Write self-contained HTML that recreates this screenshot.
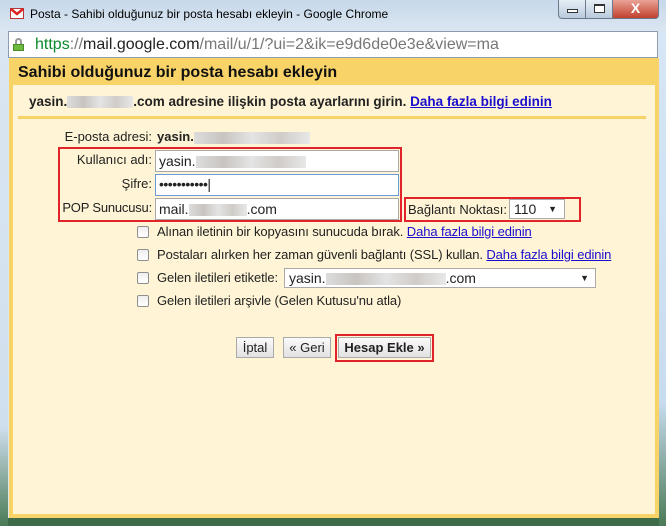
<!DOCTYPE html>
<html><head><meta charset="utf-8"><style>
*{margin:0;padding:0;box-sizing:border-box}
body{width:666px;height:526px;overflow:hidden;background:#dbe6f1;font-family:"Liberation Sans",Arial,sans-serif;font-size:13px;color:#222;position:relative}
.abs{position:absolute}
.title{left:30px;top:7px;font-size:12px;color:#000}
.wb{top:0;height:19px;border:1px solid #6b7a8c;border-top:none}
.addr{left:8px;top:31px;width:650px;height:27px;background:#fff;border:1px solid #8d9cb0;font-size:16px;line-height:25px;padding-left:26px;color:#777}
.content{left:9px;top:58px;width:650px;height:460px;background:#f8d468}
.inner{left:13px;top:85px;width:642px;height:429px;background:#fff5d6}
.h{left:18px;top:64px;font-size:16px;font-weight:bold;color:#111}
.lbl{text-align:right;width:150px;left:2px;font-size:13px}
.inp{left:155px;width:244px;height:22px;background:#fff;border:1px solid #a9a9a9;font-size:14px;line-height:20px;padding-left:3px}
.blur{display:inline-block;height:12px;background:linear-gradient(90deg,#ddd,#c8c4c0,#e4e4e4,#d0ccc8,#e8e8e8);vertical-align:middle}
.red{border:2px solid #e3232a}
.cb{left:137px;width:12px;height:12px;border:1px solid #8f8f8f;border-radius:2px;background:linear-gradient(#eee,#fff)}
.ct{left:157px;font-size:13px;letter-spacing:-0.1px}
a{color:#1a0dcc;text-decoration:underline}
.btn{top:337px;height:21px;border:1px solid #aaa;background:linear-gradient(#fafafa,#e2e2e2);font-size:13px;text-align:center;line-height:19px}
</style></head><body>
<div class="abs" style="left:0;top:0;width:666px;height:31px;background:linear-gradient(#c6d8ea,#dbe6f1)"></div>
<div class="abs" style="left:10px;top:8px;width:14px;height:11px;background:#fff;border:1px solid #b33"><svg width="12" height="9" style="display:block"><path d="M0 0 L6 5 L12 0" stroke="#d22" stroke-width="2.5" fill="none"/></svg></div>
<div class="abs title">Posta - Sahibi olduğunuz bir posta hesabı ekleyin - Google Chrome</div>
<div class="abs wb" style="left:558px;width:28px;background:linear-gradient(#e6eef6,#b9cadc);border-radius:0 0 0 4px"><div class="abs" style="left:8px;top:9px;width:11px;height:4px;border:1px solid #333;background:#fff"></div></div>
<div class="abs wb" style="left:585px;width:28px;background:linear-gradient(#e6eef6,#b9cadc)"><div class="abs" style="left:8px;top:4px;width:11px;height:9px;border:1px solid #333;border-top-width:2px;background:#fff"></div></div>
<div class="abs wb" style="left:612px;width:47px;background:linear-gradient(#e8a396,#c2402e);border-radius:0 0 4px 0;color:#fff;font-weight:bold;font-size:14px;text-align:center;line-height:17px">X</div>
<div class="abs addr"><span style="color:#0a8a2a">https</span>://<span style="color:#222">mail.google.com</span>/mail/u/1/?ui=2&amp;ik=e9d6de0e3e&amp;view=ma</div>
<div class="abs" style="left:13px;top:38px;width:11px;height:13px"><div style="width:7px;height:6px;margin-left:2px;border:2px solid #999;border-bottom:none;border-radius:4px 4px 0 0"></div><div style="width:11px;height:7px;background:#6dbb3c;border:1px solid #4a8a2a"></div></div>
<div class="abs content"></div>
<div class="abs inner"></div>
<div class="abs h">Sahibi olduğunuz bir posta hesabı ekleyin</div>
<div class="abs" style="left:29px;top:94px;font-weight:bold;font-size:13.5px">yasin.<span class="blur" style="width:66px"></span>.com adresine ilişkin posta ayarlarını girin. <a>Daha fazla bilgi edinin</a></div>
<div class="abs" style="left:18px;top:116px;width:628px;height:3px;background:#f8d468"></div>
<div class="abs lbl" style="top:129px">E-posta adresi: </div>
<div class="abs" style="left:157px;top:129px;font-weight:bold">yasin.<span class="blur" style="width:116px"></span></div>
<div class="abs red" style="left:58px;top:147px;width:344px;height:75px"></div>
<div class="abs lbl" style="top:152px">Kullanıcı adı:</div>
<div class="abs lbl" style="top:176px">Şifre:</div>
<div class="abs lbl" style="top:200px;letter-spacing:-0.2px">POP Sunucusu:</div>
<div class="abs inp" style="top:150px">yasin.<span class="blur" style="width:110px"></span></div>
<div class="abs inp" style="top:174px;border-color:#6a9ad8;line-height:18px;letter-spacing:-0.5px">•••••••••••|</div>
<div class="abs inp" style="top:198px">mail.<span class="blur" style="width:58px"></span>.com</div>
<div class="abs red" style="left:404px;top:197px;width:177px;height:25px"></div>
<div class="abs" style="left:408px;top:202px;font-size:13px">Bağlantı Noktası:</div>
<div class="abs" style="left:509px;top:199px;width:56px;height:20px;border:1px solid #aaa;background:#fff;font-size:14px;line-height:18px;padding-left:4px">110 <span style="position:absolute;right:7px;font-size:9px">▼</span></div>
<div class="abs cb" style="top:226px"></div><div class="abs ct" style="top:224px">Alınan iletinin bir kopyasını sunucuda bırak. <a>Daha fazla bilgi edinin</a></div>
<div class="abs cb" style="top:249px"></div><div class="abs ct" style="top:247px">Postaları alırken her zaman güvenli bağlantı (SSL) kullan. <a>Daha fazla bilgi edinin</a></div>
<div class="abs cb" style="top:272px"></div><div class="abs ct" style="top:270px">Gelen iletileri etiketle:</div>
<div class="abs" style="left:284px;top:268px;width:312px;height:20px;border:1px solid #aaa;background:#fff;font-size:14px;line-height:18px;padding-left:4px">yasin.<span class="blur" style="width:120px"></span>.com<span style="position:absolute;right:6px;font-size:9px">▼</span></div>
<div class="abs cb" style="top:295px"></div><div class="abs ct" style="top:293px">Gelen iletileri arşivle (Gelen Kutusu'nu atla)</div>
<div class="abs btn" style="left:236px;width:38px">İptal</div>
<div class="abs btn" style="left:283px;width:48px">« Geri</div>
<div class="abs red" style="left:335px;top:334px;width:99px;height:28px"></div>
<div class="abs btn" style="left:338px;width:93px;font-weight:bold;top:337px">Hesap Ekle »</div>
<div class="abs" style="left:0;top:518px;width:666px;height:8px;background:#3d6a48"></div>
<div class="abs" style="left:659px;top:31px;width:7px;height:495px;background:linear-gradient(#d6e6f6,#c8dcef 75%,#4a7a56)"></div>
<div class="abs" style="left:0;top:31px;width:8px;height:495px;background:linear-gradient(#dbe6f1,#d0dfee 80%,#4a7a56)"></div>
</body></html>
